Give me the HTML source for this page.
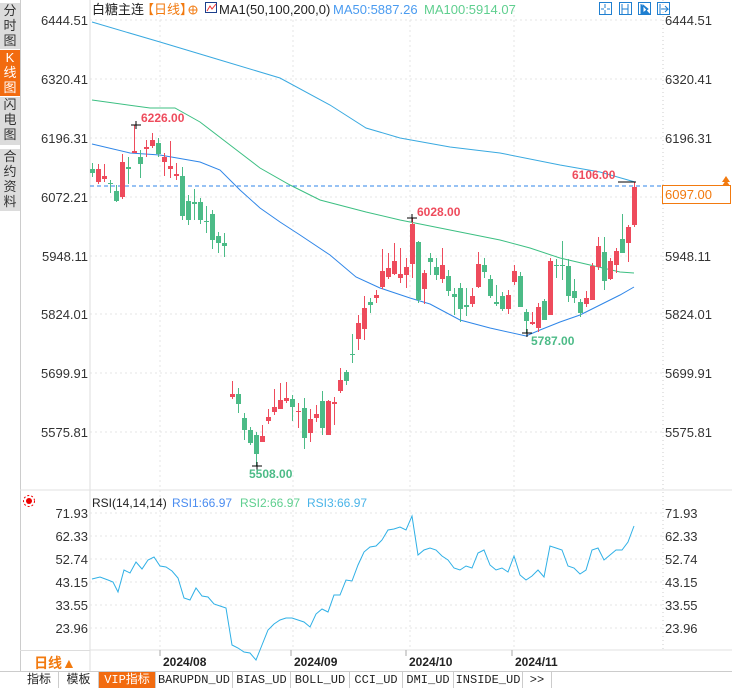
<!DOCTYPE html>
<html><head><meta charset="utf-8">
<style>
body{margin:0;width:732px;height:688px;overflow:hidden;background:#fff;font-family:"Liberation Sans","Noto Sans CJK SC",sans-serif;position:relative}
.sb{position:absolute;left:0;width:20px;background:#dcdcdc;color:#333;font-size:13px;line-height:15px;text-align:center;border-bottom:1px solid #fff}
.tab{position:absolute;top:672px;height:16px;font-size:12px;line-height:16px;text-align:center;border-right:1px solid #ccc;font-family:"Liberation Mono","Noto Sans CJK SC",monospace;color:#222}
</style></head><body>
<div class="sb" style="top:3px;height:46px">分<br>时<br>图</div>
<div class="sb" style="top:50px;height:46px;background:#f26b0f;color:#fff">K<br>线<br>图</div>
<div class="sb" style="top:97px;height:48px">闪<br>电<br>图</div>
<div class="sb" style="top:149px;height:62px">合<br>约<br>资<br>料</div>
<div style="position:absolute;left:20px;top:0;width:1px;height:672px;background:#ccc"></div>

<svg id="s" width="732" height="688" style="position:absolute;left:0;top:0" font-family="Liberation Sans, Noto Sans CJK SC, sans-serif"></svg>

<div style="position:absolute;left:20px;top:650px;width:70px;height:22px;color:#f27a0f;font-size:14px;font-weight:bold;line-height:24px;text-align:center;border-top:1px solid #ddd">日线▲</div>
<div class="tab" style="left:20px;width:38px">指标</div>
<div class="tab" style="left:59px;width:39px">模板</div>
<div class="tab" style="left:99px;width:56px;background:#f26b0f;color:#fff">VIP指标</div>
<div class="tab" style="left:156px;width:76px">BARUPDN_UD</div>
<div class="tab" style="left:233px;width:57px">BIAS_UD</div>
<div class="tab" style="left:291px;width:58px">BOLL_UD</div>
<div class="tab" style="left:350px;width:52px">CCI_UD</div>
<div class="tab" style="left:403px;width:50px">DMI_UD</div>
<div class="tab" style="left:454px;width:68px">INSIDE_UD</div>
<div class="tab" style="left:523px;width:28px">&gt;&gt;</div>
<div style="position:absolute;left:0;top:671px;width:732px;height:1px;background:#ccc"></div>

<script>
const s=document.getElementById('s');let h='';
const R='#ee4b5c',G='#4cbb87';
const py=[20,79,138,197,256,314,373,432],pl=['6444.51','6320.41','6196.31','6072.21','5948.11','5824.01','5699.91','5575.81'];
py.forEach((y,i)=>{h+=`<line x1="90" y1="${y}" x2="662" y2="${y}" stroke="#e4e4e4" stroke-dasharray="2,3"/>`;
h+=`<text x="88" y="${y+5}" text-anchor="end" font-size="13" fill="#333">${pl[i]}</text><text x="665" y="${y+5}" font-size="13" fill="#333">${pl[i]}</text>`;});
[160,293,410,514].forEach(x=>{h+=`<line x1="${x}" y1="10" x2="${x}" y2="650" stroke="#e4e4e4" stroke-dasharray="2,3"/>`;});
h+=`<line x1="90" y1="0" x2="90" y2="672" stroke="#ddd"/><line x1="663" y1="0" x2="663" y2="650" stroke="#ccc" stroke-dasharray="1,3"/>`;
h+=`<line x1="20" y1="490" x2="732" y2="490" stroke="#e2e2e2"/><line x1="90" y1="650" x2="732" y2="650" stroke="#e2e2e2"/>`;
const ry=[513,536,559,582,605,628],rl=['71.93','62.33','52.74','43.15','33.55','23.96'];
ry.forEach((y,i)=>{h+=`<line x1="90" y1="${y}" x2="662" y2="${y}" stroke="#e4e4e4" stroke-dasharray="2,3"/>`;
h+=`<text x="88" y="${y+5}" text-anchor="end" font-size="13" fill="#333">${rl[i]}</text><text x="665" y="${y+5}" font-size="13" fill="#333">${rl[i]}</text>`;});
const pl2=p=>p.map(a=>a.join(',')).join(' ');
h+=`<polyline fill="none" stroke="#39a9e0" points="${pl2([[92,22],[160,42],[220,60],[280,78],[330,105],[366,128],[400,138],[450,147],[500,153],[560,165],[600,172],[635,182]])}"/>`;
h+=`<polyline fill="none" stroke="#3cbf82" points="${pl2([[92,100],[150,108],[175,108],[200,122],[230,145],[260,168],[290,185],[320,200],[366,212],[400,220],[450,230],[500,240],[530,248],[560,258],[590,265],[620,272],[634,273]])}"/>`;
h+=`<polyline fill="none" stroke="#2f86e8" points="${pl2([[92,144],[130,153],[160,155],[200,162],[220,170],[240,190],[260,208],[280,222],[300,235],[330,255],[356,277],[380,288],[410,298],[430,304],[460,320],[490,328],[526,336],[540,330],[560,322],[580,315],[600,305],[620,295],[634,287]])}"/>`;
h+=`<line x1="90" y1="186" x2="662" y2="186" stroke="#2f86e8" stroke-dasharray="4,3"/>`;
const C=[[92,G,169,173,163,177],[98,R,169,182,164,184],[104,R,176,179,164,182],[110,G,183,184,180,193],[116,G,191,201,185,202],[122,R,162,197,154,199],[128,G,167,169,157,184],[134,R,151,153,125,153],[140,G,157,164,150,178],[146,R,147,149,140,157],[152,R,140,146,133,148],[158,G,143,154,138,157],[164,R,157,162,153,176],[170,R,166,169,141,178],[176,R,174,176,163,180],[182,G,176,216,167,220],[188,G,201,220,195,225],[194,G,202,204,189,220],[200,G,202,220,198,224],[206,G,221,222,206,233],[212,G,214,240,210,249],[218,G,236,243,232,253],[224,G,243,246,233,257],
[232,R,394,397,381,399],[238,G,394,404,388,413],[244,G,418,430,413,440],[250,G,430,443,427,445],[256,G,435,454,432,466],[262,R,436,442,425,442],[268,R,417,421,409,424],[274,R,407,412,389,415],[280,R,400,409,383,409],[286,R,398,401,382,403],[292,G,399,407,395,421],[298,R,411,412,403,428],[304,G,408,438,398,449],[310,R,419,433,409,442],[316,R,414,418,405,422],[322,G,401,428,391,435],[328,R,401,435,400,435],[334,R,402,404,397,425],[340,R,380,391,368,393],[346,G,372,381,370,385],[352,G,354,355,334,363],[358,R,323,339,315,350],[364,R,308,329,296,340],[370,G,302,305,298,313],[376,R,295,298,290,303],[382,R,271,287,249,289],[388,R,268,277,253,279],[394,R,261,274,243,275],[400,R,274,278,248,283],[406,R,267,275,258,288],[412,R,224,264,218,278],[418,G,242,300,241,303],[424,R,273,289,270,304],[430,G,258,262,253,275],[436,G,267,275,258,280],[442,R,265,279,248,283],[448,G,276,291,270,296],[454,G,294,297,288,315],[460,G,288,309,283,322],[466,G,305,307,288,316],[472,R,296,304,288,307],[478,R,264,287,252,288],[484,G,265,272,258,278],[490,G,279,296,275,298],[496,G,302,304,285,306],[502,G,296,309,292,311],[508,R,295,309,290,314],[514,R,271,282,265,285],[520,G,276,307,272,307],[526,G,312,321,309,333],[532,R,322,324,312,325],[538,R,307,328,303,332],[544,G,301,320,299,320],[550,R,261,315,258,315],[556,G,265,266,259,278],[562,G,265,266,241,280],[568,G,266,296,259,302],[574,G,291,298,279,303],[580,G,302,313,299,317],[586,R,298,304,291,307],[592,R,266,300,263,300],[598,R,246,267,237,270],[604,G,252,281,237,290],[610,R,261,279,258,280],[616,R,251,265,248,273],[622,G,239,253,214,253],[628,R,227,243,225,262],[634,R,187,225,182,227]];
C.forEach(c=>{h+=`<line x1="${c[0]+.5}" y1="${c[4]}" x2="${c[0]+.5}" y2="${c[5]}" stroke="${c[1]}"/><rect x="${c[0]-2}" y="${c[2]}" width="5" height="${Math.max(1,c[3]-c[2])}" fill="${c[1]}"/>`;});
const mk=(x,y)=>`<line x1="${x-5}" y1="${y}" x2="${x+5}" y2="${y}" stroke="#000"/><line x1="${x}" y1="${y-4}" x2="${x}" y2="${y+4}" stroke="#000"/>`;
h+=mk(136,125)+mk(412,218)+mk(257,466)+mk(527,333);
h+=`<line x1="618" y1="182" x2="636" y2="182" stroke="#000"/>`;
h+=`<text x="141" y="122" font-size="12" font-weight="bold" fill="${R}">6226.00</text><text x="417" y="216" font-size="12" font-weight="bold" fill="${R}">6028.00</text><text x="572" y="179" font-size="12" font-weight="bold" fill="${R}">6106.00</text><text x="249" y="478" font-size="12" font-weight="bold" fill="${G}">5508.00</text><text x="531" y="345" font-size="12" font-weight="bold" fill="${G}">5787.00</text>`;
h+=`<rect x="662.5" y="185.5" width="68" height="18" fill="#fff" stroke="#f27a0f"/><text x="665" y="199" font-size="13" fill="#f27a0f">6097.00</text><path d="M722 182 l4-6 4 6z M722 186 l4-6 4 6z" fill="#f27a0f"/>`;
h+=`<text x="92" y="14" font-size="13" fill="#222">白糖主连</text><text x="141" y="14" font-size="13" fill="#f27a0f">【日线】</text><circle cx="193" cy="10" r="4" fill="none" stroke="#f27a0f"/><line x1="189" y1="10" x2="197" y2="10" stroke="#f27a0f"/><line x1="193" y1="6" x2="193" y2="14" stroke="#f27a0f"/>`;
h+=`<rect x="205.5" y="2.5" width="11" height="10" fill="none" stroke="#1c3f8c"/><polyline points="207,11 210,6 212,9 216,4" fill="none" stroke="#e33"/>`;
h+=`<text x="219" y="14" font-size="13" fill="#222">MA1(50,100,200,0)</text><text x="333" y="14" font-size="13" fill="#4a9bf0">MA50:5887.26</text><text x="424" y="14" font-size="13" fill="#5fcf8f">MA100:5914.07</text>`;
[600,620,639,658].forEach(x=>{h+=`<rect x="${x-0.5}" y="2.5" width="12" height="12" fill="none" stroke="#1f7fd0"/>`;});
h+=`<path d="M605 4v4M605 10v4M601 9h3M607 9h3" stroke="#1f7fd0"/><path d="M622 4v10M628 4v10M622 9h6" stroke="#1f7fd0"/><path d="M641 4v10h9M643 5l5 4-5 4z" stroke="#1f7fd0" fill="#1f7fd0"/><path d="M660 4v10M661 9h7l-3-3M665 12l3-3" stroke="#1f7fd0" fill="none"/>`;
h+=`<circle cx="29" cy="501" r="3" fill="#e00"/><circle cx="29" cy="501" r="5.5" fill="none" stroke="#e00" stroke-dasharray="2,2"/>`;
h+=`<text x="92" y="507" font-size="12" fill="#222">RSI(14,14,14)</text><text x="172" y="507" font-size="12" fill="#4a8cf0">RSI1:66.97</text><text x="240" y="507" font-size="12" fill="#5fcf8f">RSI2:66.97</text><text x="307" y="507" font-size="12" fill="#4ab4e8">RSI3:66.97</text>`;
const rs=[[92,579],[100,577],[108,580],[113,582],[118,592],[124,570],[130,573],[136,562],[142,569],[148,560],[154,557],[160,566],[166,567],[172,571],[178,578],[184,598],[190,600],[196,588],[202,596],[208,597],[214,604],[220,606],[226,608],[232,645],[238,648],[244,652],[250,653],[256,660],[262,645],[268,630],[274,624],[280,620],[286,618],[292,618],[298,620],[304,622],[310,627],[316,614],[322,609],[328,612],[334,595],[340,595],[346,580],[352,581],[358,565],[364,552],[370,547],[376,546],[382,540],[388,530],[394,529],[400,527],[406,530],[412,516],[418,555],[424,550],[430,548],[436,550],[442,556],[448,560],[454,568],[460,570],[466,566],[472,568],[478,553],[484,550],[490,565],[496,570],[502,568],[508,572],[514,556],[520,575],[526,580],[532,576],[538,570],[544,577],[550,546],[556,548],[562,550],[568,566],[574,568],[580,574],[586,570],[592,550],[598,548],[604,560],[610,555],[616,550],[622,550],[628,542],[634,526]];
h+=`<polyline fill="none" stroke="#2fb0e6" points="${pl2(rs)}"/>`;
[[163,'2024/08'],[294,'2024/09'],[409,'2024/10'],[515,'2024/11']].forEach(d=>{h+=`<line x1="${d[0]-3}" y1="650" x2="${d[0]-3}" y2="656" stroke="#aaa"/><text x="${d[0]}" y="666" font-size="12" font-weight="bold" fill="#222">${d[1]}</text>`;});
s.innerHTML=h;
</script>
</body></html>
